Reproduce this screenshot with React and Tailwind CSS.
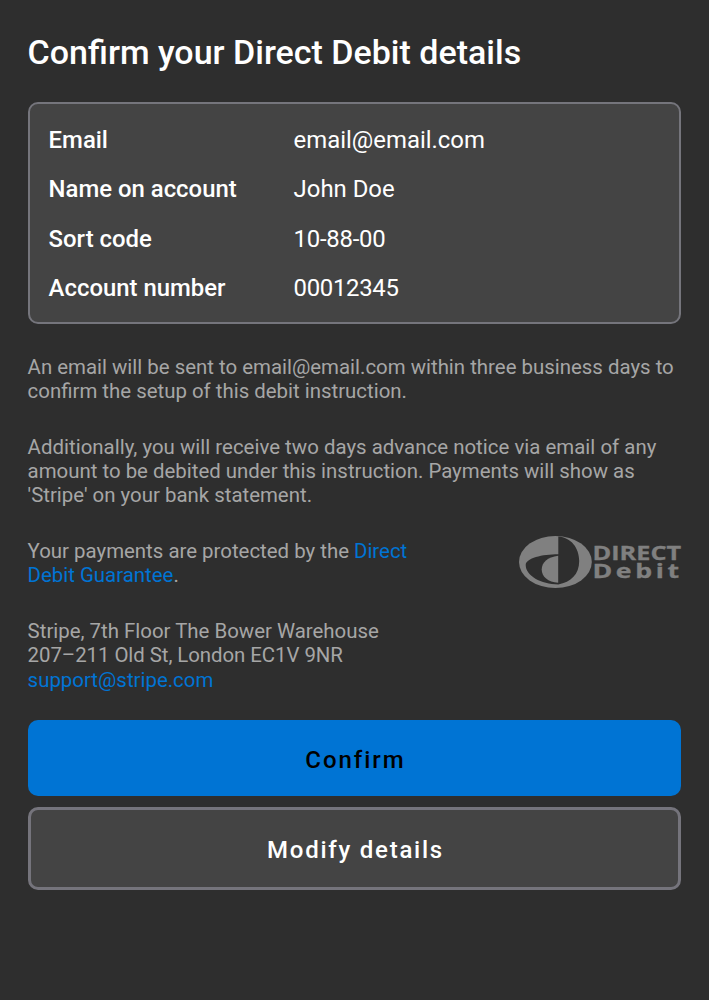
const rows = [
  ['Email', 'email@email.com', ''],
  ['Name on account', 'John Doe', ''],
  ['Sort code', '10-88-00', 'tracking-[-0.25px]'],
  ['Account number', '00012345', 'tracking-[-0.3px]'],
];

function DirectDebitLogo() {
  return (
    <svg className="mt-[-4px] mr-[-2px] h-[54px] w-[166px] shrink-0 overflow-visible" viewBox="0 0 166 54" fill="#808080" role="img" aria-label="Direct Debit">
      <ellipse cx="38.4" cy="27" rx="36.4" ry="26" />
      <path d="M41.3 1.4C54 2.5 62.2 12.5 62.2 26S54 47 41.3 49.4C24 49 8.7 41 8.7 30C9 23 25 19.2 41.3 19.2Z" fill="#2e2e2e" />
      <path d="M41.2 20.7C30.5 22 24.7 27.5 24.7 34.5S31 47.3 41.2 47.8Z" />
      <g fontFamily="Open Sans, sans-serif" fontWeight="700" fontSize="19.2" stroke="#808080" strokeWidth="0.3">
        <text x="0" y="0" transform="translate(75.5 25) scale(1.36 1)" textLength="65.2" lengthAdjust="spacingAndGlyphs">DIRECT</text>
        <text x="0" y="0" transform="translate(75.5 42.6) scale(1.42 1)" fontSize="18.8" letterSpacing="2.55">Debit</text>
      </g>
    </svg>
  );
}

export default function App() {
  return (
    <main className="h-[1000px] w-[709px] bg-[#2e2e2e] px-[27.6px] pt-8 font-['Roboto',sans-serif]">
      <h1 className="h-[70px] text-[34px] leading-[41px] font-medium text-white">Confirm your Direct Debit details</h1>
      <dl className="h-[222px] rounded-[10px] border-2 border-[#75757c] bg-[#444444] px-[19px] pt-[12px] text-[23.9px] leading-[49px] text-white">
        {rows.map(([label, value, tracking]) => (
          <div key={label} className="flex h-[49.3px]">
            <dt className="w-[245px] font-medium">{label}</dt>
            <dd className={tracking}>{value}</dd>
          </div>
        ))}
      </dl>
      <div className="pt-[30.6px] text-[20.42px] leading-[24.15px] whitespace-nowrap text-[#a6a6a6]">
        <p className="mb-[31.7px]">An email will be sent to email@email.com within three business days to<br />confirm the setup of this debit instruction.</p>
        <p className="mb-[31.7px]"><span className="tracking-[0.02px]">Additionally, you will receive two days advance notice via email of any</span><br />amount to be debited under this instruction. Payments will show as<br />'Stripe' on your bank statement.</p>
        <div className="mb-[31.8px] flex h-[48.4px] justify-between">
          <p>Your payments are protected by the <a className="text-[#0074d4]">Direct<br />Debit Guarantee</a>.</p>
          <DirectDebitLogo />
        </div>
        <p className="h-[72.5px] leading-[24.5px]">Stripe, 7th Floor The Bower Warehouse<br /><span className="tracking-[-0.06px]">207–211 Old St, London EC1V 9NR</span><br /><a className="text-[#0074d4]">support@stripe.com</a></p>
      </div>
      <button className="mt-[28.7px] block h-[76px] w-full rounded-[10px] bg-[#0074d4] pt-[4px] pl-[2px] text-[24px] font-medium tracking-[1.95px] text-black">Confirm</button>
      <button className="mt-[11px] block h-[82.5px] w-full rounded-[10px] border-[3px] border-[#75747c] bg-[#444444] pt-[3px] pl-[2px] text-[24px] font-medium tracking-[1.75px] text-white">Modify details</button>
    </main>
  );
}
